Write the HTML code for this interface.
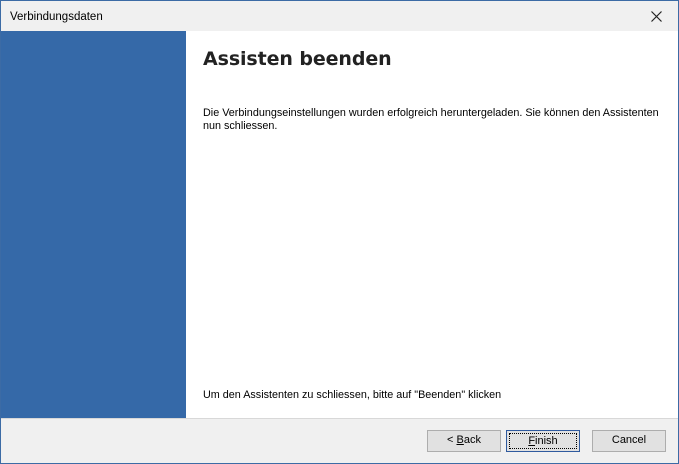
<!DOCTYPE html>
<html><head><style>
body{margin:0;width:679px;height:464px;overflow:hidden;font-family:"Liberation Sans","DejaVu Sans",sans-serif;}
.win{position:absolute;left:0;top:0;width:677px;height:462px;border:1px solid #3c6ba5;background:#f0f0f0;}
.title{position:absolute;left:0;top:0;width:677px;height:30px;background:#f0f0f0;font-size:11.5px;color:#000;}
.title span{position:absolute;left:9px;top:10px;}
.x{position:absolute;left:650px;top:10px;}
.side{position:absolute;left:0;top:30px;width:185px;height:388px;background:#3569a8;}
.main{position:absolute;left:185px;top:30px;width:492px;height:388px;background:#fff;}
h1{position:absolute;left:17px;top:17px;margin:0;font-family:"DejaVu Sans",sans-serif;font-weight:bold;font-size:19px;color:#222;letter-spacing:-0.1px;}
.p{position:absolute;left:17px;top:76px;width:470px;font-size:10.8px;line-height:13px;color:#000;}
.p2{position:absolute;left:17px;top:358px;font-size:10.8px;color:#000;}
.sep{position:absolute;left:0;top:417px;width:677px;height:1px;background:#d8d8d8;}
.btn{position:absolute;top:429px;width:72px;height:20px;border:1px solid #adadad;background:#e1e1e1;font-size:11px;text-align:center;line-height:19px;box-sizing:content-box;}
.btn.def{border:1px solid #2f5a9e;background:#e1e1e1;}
.btn.def span{position:absolute;left:2px;top:2px;right:2px;bottom:2px;border:1px dotted #000;line-height:15px;}
</style></head><body>
<div class="win">
<div class="title"><span>Verbindungsdaten</span>
<svg class="x" width="11" height="11" viewBox="0 0 11 11"><path d="M0.5 0.5L10.5 10.5M10.5 0.5L0.5 10.5" stroke="#222" stroke-width="1.2"/></svg></div>
<div class="side"></div>
<div class="main">
<h1>Assisten beenden</h1>
<div class="p">Die Verbindungseinstellungen wurden erfolgreich heruntergeladen. Sie können den Assistenten nun schliessen.</div>
<div class="p2">Um den Assistenten zu schliessen, bitte auf "Beenden" klicken</div>
</div>
<div class="sep"></div>
<div class="btn" style="left:426px">&lt; <u>B</u>ack</div>
<div class="btn def" style="left:505px"><span><u>F</u>inish</span></div>
<div class="btn" style="left:591px">Cancel</div>
</div>
</body></html>
